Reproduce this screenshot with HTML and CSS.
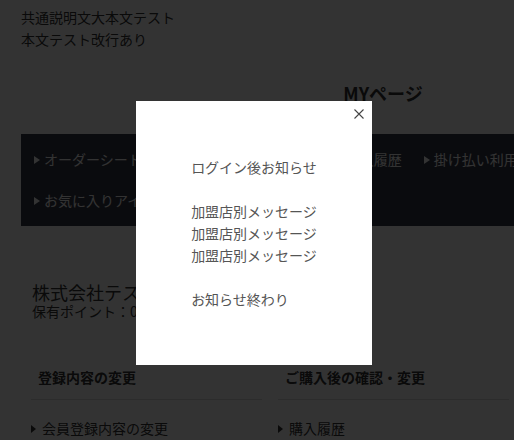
FILE: index.html
```html
<!DOCTYPE html>
<html lang="ja">
<head>
    <meta charset="UTF-8">
    <meta name="viewport" content="width=device-width, initial-scale=1.0">
    <title>MYページ</title>
    <link rel="stylesheet" href="styles.css">
</head>
<body>

<div class="container">
    <p class="lead">共通説明文大本文テスト<br>本文テスト改行あり</p>

    <h1>MYページ</h1>

    <nav class="mynav">
        <ul class="nav-row">
            <li><a href="#">オーダーシート</a></li>
            <li><a href="#">お届け先の登録・変更</a></li>
            <li><a href="#">購入履歴</a></li>
            <li><a href="#">掛け払い利用明細</a></li>
        </ul>
        <ul class="nav-row">
            <li><a href="#">お気に入りアイテム</a></li>
        </ul>
    </nav>

    <div class="member">
        <p class="company">株式会社テスト 様</p>
        <p class="points">保有ポイント：0pt</p>
    </div>

    <div class="menu-cols">
        <div class="menu-col">
            <h2>登録内容の変更</h2>
            <ul class="links">
                <li><a href="#">会員登録内容の変更</a></li>
            </ul>
        </div>
        <div class="menu-col">
            <h2>ご購入後の確認・変更</h2>
            <ul class="links">
                <li><a href="#">購入履歴</a></li>
            </ul>
        </div>
        <div class="menu-col">
            <h2>その他</h2>
            <ul class="links">
                <li><a href="#">ログアウト</a></li>
            </ul>
        </div>
    </div>
</div>

<!-- お知らせモーダル -->
<div class="overlay"></div>
<div class="modal">
    <button class="modal-close" type="button" aria-label="閉じる">
        <svg width="10" height="10" viewBox="0 0 10 10"><path d="M0.5 0.5 L9.5 9.5 M9.5 0.5 L0.5 9.5" stroke="#444" stroke-width="1.1" fill="none"/></svg>
    </button>
    <div class="modal-body">
        <p>ログイン後お知らせ<br><br>加盟店別メッセージ<br>加盟店別メッセージ<br>加盟店別メッセージ<br><br>お知らせ終わり</p>
    </div>
</div>

</body>
</html>
```

FILE: styles.css
```css
body { margin: 0; background: #fff; color: #333; font-family: "Noto Sans CJK JP", sans-serif; font-size: 14px; overflow: hidden; }
a { color: inherit; text-decoration: none; }
ul { list-style: none; margin: 0; padding: 0; }
p { margin: 0; }

.container { width: 724px; margin-left: 21px; padding-top: 6px; }
.lead { line-height: 22px; }
h1 { margin: 30px 0 27px; font-size: 18px; line-height: 27px; text-align: center; color: #333; }

/* ナビ */
.mynav { background: #323746; padding: 5px 13px; }
.nav-row { display: flex; }
.nav-row li { padding: 10px 0; line-height: 21px; margin-right: 22px; white-space: nowrap; }
.nav-row a { color: #fff; display: flex; align-items: center; }
.nav-row a::before { content: ""; border-left: 6px solid #fff; border-top: 4px solid transparent; border-bottom: 4px solid transparent; margin-right: 4px; }

/* 会員情報 */
.member { margin-top: 55px; padding: 0 11px; }
.company { font-size: 18px; line-height: 22px; }
.points { line-height: 16px; }

.menu-cols { display: grid; grid-template-columns: repeat(3, 231px); gap: 16px; margin-top: 48px; padding-left: 10px; }
.menu-col h2 { margin: 0; font-size: 14px; line-height: 21px; padding: 0 7px 11px; border-bottom: 1px solid #ddd; }
.links { margin-top: 18px; }
.links li { line-height: 21px; }
.links a { display: flex; align-items: center; }
.links a::before { content: ""; border-left: 5px solid #333; border-top: 4px solid transparent; border-bottom: 4px solid transparent; margin-right: 6px; }

/* モーダル */
.overlay { position: fixed; inset: 0; background: rgba(0, 0, 0, 0.8); }
.modal { position: fixed; left: 136px; top: 101px; width: 236px; background: #fff; padding: 55px 0; text-align: center; }
.modal-close { position: absolute; top: 7px; right: 7px; width: 12px; height: 12px; padding: 1px; margin: 0; border: none; background: none; cursor: pointer; display: flex; }
.modal-body p { display: inline-block; text-align: left; color: #555; line-height: 22px; }
```
